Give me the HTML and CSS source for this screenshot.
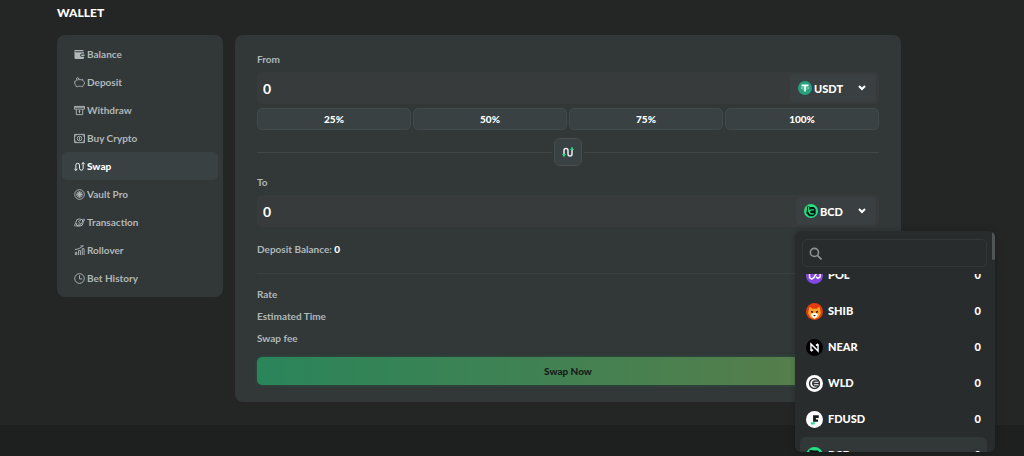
FILE: index.html
```html
<!DOCTYPE html>
<html lang="en">
<head>
    <meta charset="UTF-8">
    <meta name="viewport" content="width=device-width, initial-scale=1.0">
    <title>Wallet - Swap</title>
    <link rel="stylesheet" href="styles.css">
</head>
<body>
    <main class="page">
        <h1>WALLET</h1>
        <div class="wallet">
            <nav class="menu">
                <a href="#balance">
                    <svg class="icon" viewBox="0 0 24 24"><path fill="currentColor" d="M3 2h16a2 2 0 0 1 2 2v1H3.500a1 1 0 0 0 0 2H22v3h-5a3.500 3.500 0 0 0 0 7h5v2a3 3 0 0 1-3 3H4a3 3 0 0 1-3-3V4a2 2 0 0 1 2-2zm14 10h6v3h-6a1.500 1.500 0 0 1 0-3z"/></svg>
                    Balance
                </a>
                <a href="#deposit">
                    <svg class="icon line" viewBox="0 0 24 24"><path d="M11 6h5l3-1v3c3 1 4 3 4 5s-1 4-3 5l-1 3h-3l-2-1h-4l-2 1H5l-1-3C0 14 1 8 6 7M1 9l2 2"/><circle cx="8" cy="4" r="2.500"/></svg>
                    Deposit
                </a>
                <a href="#withdraw">
                    <svg class="icon line" viewBox="0 0 24 24"><path d="M1 9V3h22v6zM1 5h22M5 9v12h14V9M12 11v7M10 14h4"/></svg>
                    Withdraw
                </a>
                <a href="#buy">
                    <svg class="icon line" viewBox="0 0 24 24"><path d="M1 3h22v18H1zM1 9l5-6M23 9l-5-6M1 15l5 6M23 15l-5 6"/><circle cx="12" cy="12" r="5"/><path d="M12 9v6"/></svg>
                    Buy Crypto
                </a>
                <a href="#swap" class="active">
                    <svg class="icon line" viewBox="0 0 24 24"><path d="M4 19V9a4 4 0 0 1 8 0v7a4 4 0 0 0 8 0V5M1 17l3 4 3-4M17 7l3-4 3 4"/></svg>
                    Swap
                </a>
                <a href="#vault">
                    <svg class="icon line" viewBox="0 0 24 24"><circle cx="12" cy="12" r="10.500"/><circle cx="12" cy="12" r="6"/><path d="M12 6v12M6 12h12M8 8l8 8M16 8l-8 8"/></svg>
                    Vault Pro
                </a>
                <a href="#transaction">
                    <svg class="icon line" viewBox="0 0 24 24"><circle cx="12" cy="12" r="8"/><path d="M6 17C0 23 0 17 4 13M18 7c6-6 6 0 2 4M5 20c7 1 13-5 15-14M15 8c-5-1-7 2-3 4s1 5-4 3"/></svg>
                    Transaction
                </a>
                <a href="#rollover">
                    <svg class="icon line" viewBox="0 0 24 24"><path d="M3 22v-6h3v6M10 22V12h4v10M18 22V8h4v14M2 10c7-1 12-3 18-8M14 2h7"/></svg>
                    Rollover
                </a>
                <a href="#history">
                    <svg class="icon line" viewBox="0 0 24 24"><circle cx="12" cy="12" r="10.500"/><path d="M12 5v8h6"/></svg>
                    Bet History
                </a>
            </nav>

            <form class="swap">
                <label class="caption" for="fromAmount">From</label>
                <div class="field">
                    <input type="text" id="fromAmount" value="0">
                    <div class="coin">
                        <svg class="coin-icon" viewBox="0 0 24 24"><circle cx="12" cy="12" r="12" fill="#26a17b"/><path d="M6 6h12v3h-4.500v9h-3V9H6z" fill="#fff"/><ellipse cx="12" cy="12" rx="7" ry="2" fill="none" stroke="#c9efe0"/></svg>
                        <select aria-label="From currency">
                            <option>USDT</option>
                            <option>BCD</option>
                        </select>
                        <svg class="chevron" viewBox="0 0 12 12"><path d="M3 4l3 3 3-3"/></svg>
                    </div>
                </div>
                <div class="percents">
                    <button type="button">25%</button>
                    <button type="button">50%</button>
                    <button type="button">75%</button>
                    <button type="button">100%</button>
                </div>
                <div class="flip">
                    <button type="button" aria-label="Switch currencies">
                        <svg viewBox="0 0 24 24"><path d="M4 18V9a4 4 0 0 1 8 0v7a4 4 0 0 0 8 0V6" fill="none" stroke="#e8eded" stroke-width="3"/><path d="M0 16h8l-4 7zM16 8h8l-4-7z" fill="#24d67e"/></svg>
                    </button>
                </div>

                <label class="caption" for="toAmount">To</label>
                <div class="field">
                    <input type="text" id="toAmount" value="0">
                    <div class="coin coin-open">
                        <svg class="coin-icon" viewBox="0 0 24 24"><circle cx="12" cy="12" r="12" fill="#24e083"/><path d="M5 4l6 1h6l3 4v8l-4 4H9l-5-5 1-6z" fill="#0c1512"/><path d="M17 10h-4a3 3 0 0 0 0 7h4M8 5v9" fill="none" stroke="#24e083" stroke-width="2"/></svg>
                        <select aria-label="To currency">
                            <option>BCD</option>
                            <option>USDT</option>
                        </select>
                        <svg class="chevron" viewBox="0 0 12 12"><path d="M3 4l3 3 3-3"/></svg>
                    </div>

                    <div class="dropdown">
                        <div class="search">
                            <svg viewBox="0 0 24 24"><circle cx="10" cy="10" r="7.500"/><path d="M16 16l7 7"/></svg>
                            <input type="text" aria-label="Search currency">
                        </div>
                        <ul class="coins" id="coins">
                            <li>
                                <svg viewBox="0 0 24 24"><circle cx="12" cy="12" r="12" fill="#8247e5"/><path d="M5 10v5l3 2 3-2 3-5 3-2 3 2v4l-3 2-3-2" fill="none" stroke="#fff" stroke-width="2"/></svg>
                                <span>POL</span><b>0</b>
                            </li>
                            <li>
                                <svg viewBox="0 0 24 24"><circle cx="12" cy="12" r="12" fill="#e33b0e"/><path d="M5 5l4 3h6l4-3 2 9-3 6-6 3-6-3-3-6z" fill="#f9a22c"/><path d="M7 16l4-2h2l4 2-2 4-3 2-3-2z" fill="#fff"/><path d="M7 12l3 1M17 12l-3 1" stroke="#48200c" stroke-width="2"/><path d="M10 17h4l-2 2z" fill="#2b1710"/></svg>
                                <span>SHIB</span><b>0</b>
                            </li>
                            <li>
                                <svg viewBox="0 0 24 24"><circle cx="12" cy="12" r="12" fill="#000"/><path d="M7 17V7l10 10V7M7 17l3-2M17 7l-3 2" fill="none" stroke="#fff" stroke-width="2"/></svg>
                                <span>NEAR</span><b>0</b>
                            </li>
                            <li>
                                <svg viewBox="0 0 24 24"><circle cx="12" cy="12" r="12" fill="#fff"/><g fill="none" stroke="#303435" stroke-width="2"><circle cx="12" cy="12" r="7"/><path d="M17 8.500h-4a3.500 3.500 0 0 0 0 7h4M9 12h10"/></g></svg>
                                <span>WLD</span><b>0</b>
                            </li>
                            <li>
                                <svg viewBox="0 0 24 24"><circle cx="12" cy="12" r="12" fill="#fff"/><path d="M10 6h8v4h-4v2h3v3h-7z" fill="#15191a"/><path d="M7 16h6l-1 3H7z" fill="#27dc92"/></svg>
                                <span>FDUSD</span><b>0</b>
                            </li>
                            <li class="selected">
                                <svg viewBox="0 0 24 24"><circle cx="12" cy="12" r="12" fill="#24e083"/><path d="M5 4l6 1h6l3 4v8l-4 4H9l-5-5 1-6z" fill="#0c1512"/></svg>
                                <span>BCD</span><b>0</b>
                            </li>
                        </ul>
                        <div class="thumb"></div>
                    </div>
                </div>
                <p class="balance">Deposit Balance: <b>0</b></p>

                <div class="details">
                    <p>Rate</p>
                    <p>Estimated Time</p>
                    <p>Swap fee</p>
                </div>
                <button type="submit" class="submit">Swap Now</button>
            </form>
        </div>
    </main>
    <footer></footer>

    <script>
        // Open the list part way down, near the selected coin
        document.getElementById("coins").scrollTop = 17;
    </script>
</body>
</html>
```

FILE: styles.css
```css
* {
    box-sizing: border-box;
}

body {
    background-color: #242626;
    color: #ffffff;
    font-family: Lato, "Liberation Sans", sans-serif;
    font-size: 11px;
    line-height: 14px;
    margin: 0;
    min-height: 100vh;
    display: flex;
    flex-direction: column;
}

button, input, select {
    font-family: inherit;
    color: #ffffff;
}

.page {
    padding: 5px 123px 23px 57px;
}

h1 {
    font-size: 12px;
    font-weight: 900;
    line-height: 16px;
    margin: 0 0 14px;
}

.wallet {
    display: flex;
    align-items: flex-start;
    gap: 12px;
}

.menu {
    flex: 0 0 166px;
    padding: 5px;
    border-radius: 8px;
    background-color: #323738;
}

.menu a {
    display: flex;
    align-items: center;
    gap: 2px;
    height: 28px;
    padding: 0 12px;
    border-radius: 5px;
    color: #b0b8b9;
    font-size: 10px;
    font-weight: bold;
    text-decoration: none;
}

.menu .active {
    background-color: #3a4142;
    color: #ffffff;
    font-weight: 900;
}

.icon {
    width: 11px;
    height: 11px;
}

.line {
    fill: none;
    stroke: currentColor;
    stroke-width: 2;
}

.swap {
    flex: 1;
    min-width: 0;
    padding: 17px 22px;
    border-radius: 8px;
    background-color: #323738;
}

.caption, .balance, .details {
    color: #b0b8b9;
    font-size: 10px;
    font-weight: bold;
}

.caption {
    display: block;
    margin-bottom: 6px;
}

.field {
    position: relative;
    display: flex;
    align-items: center;
    height: 32px;
    padding-right: 3px;
    border-radius: 5px;
    background-color: #373b3c;
}

.field > input {
    flex: 1;
    min-width: 0;
    padding: 0 6px;
    border: none;
    background: none;
    font-size: 14px;
    font-weight: bold;
}

.coin {
    display: flex;
    align-items: center;
    gap: 2px;
    width: 86px;
    height: 28px;
    padding: 0 8px;
    border-radius: 5px;
    background-color: #3a4041;
}

.coin-open {
    width: 80px;
}

.coin-icon {
    flex: none;
    width: 14px;
    height: 14px;
}

.coin select {
    flex: 1;
    min-width: 0;
    padding: 0;
    border: none;
    appearance: none;
    background: none;
    font-size: 11px;
    font-weight: 900;
}

.chevron {
    flex: none;
    width: 12px;
    height: 12px;
    fill: none;
    stroke: #ffffff;
    stroke-width: 2;
}

.percents {
    display: grid;
    grid-template-columns: repeat(4, 1fr);
    gap: 2px;
    margin-top: 4px;
}

.percents button {
    height: 22px;
    border: 1px solid #434a4b;
    border-radius: 5px;
    background-color: #3a4142;
    font-size: 10px;
    font-weight: 900;
}

.flip {
    display: flex;
    align-items: center;
    gap: 2px;
    margin: 8px 0 9px;
}

.flip::before, .flip::after {
    content: "";
    flex: 1;
    height: 1px;
    background-color: #414647;
}

.flip button {
    display: flex;
    align-items: center;
    justify-content: center;
    width: 28px;
    height: 28px;
    padding: 0;
    border: 1px solid #484e4f;
    border-radius: 6px;
    background-color: #3a4142;
}

.flip svg {
    width: 12px;
    height: 12px;
}

.balance {
    margin: 15px 0 17px;
}

.balance b {
    color: #ffffff;
}

.details {
    padding-top: 13px;
    border-top: 1px solid #3b4041;
}

.details p {
    margin: 0 0 8px;
}

.submit {
    display: block;
    width: 100%;
    height: 28px;
    margin-top: 12px;
    border: none;
    border-radius: 5px;
    background: linear-gradient(90deg, #2a855a, #5c7d49);
    box-shadow: 0 0 4px rgba(36, 133, 88, 0.4);
    color: #171c1b;
    font-size: 10px;
    font-weight: 900;
}

.dropdown {
    position: absolute;
    z-index: 1;
    top: 36px;
    right: -116px;
    width: 200px;
    height: 221px;
    padding: 8px 8px 0 5px;
    border-radius: 6px;
    background-color: #292c2d;
    box-shadow: 0 0 6px rgba(0, 0, 0, 0.2);
    overflow: hidden;
}

.search {
    display: flex;
    align-items: center;
    gap: 6px;
    height: 28px;
    margin: 0 0 7px 2px;
    padding: 0 6px;
    border: 1px solid #33383a;
    border-radius: 5px;
}

.search svg {
    flex: none;
    width: 13px;
    height: 13px;
    fill: none;
    stroke: #8c9294;
    stroke-width: 3;
}

.search input {
    flex: 1;
    min-width: 0;
    border: none;
    background: none;
}

.coins {
    height: 178px;
    margin: 0;
    padding: 0;
    list-style: none;
    overflow-y: auto;
    scrollbar-width: none;
}

.coins li {
    display: flex;
    align-items: center;
    height: 36px;
    padding: 0 6px;
    border-radius: 6px;
    font-weight: 900;
}

.coins .selected {
    background-color: #323738;
}

.coins svg {
    width: 17px;
    height: 17px;
    margin-right: 5px;
}

.coins b {
    margin-left: auto;
    font-size: 11px;
}

.thumb {
    position: absolute;
    top: 1px;
    right: 0;
    width: 3px;
    height: 28px;
    border-radius: 2px;
    background-color: #505556;
}

footer {
    flex: 1;
    min-height: 32px;
    background-color: #1e2020;
}
```
